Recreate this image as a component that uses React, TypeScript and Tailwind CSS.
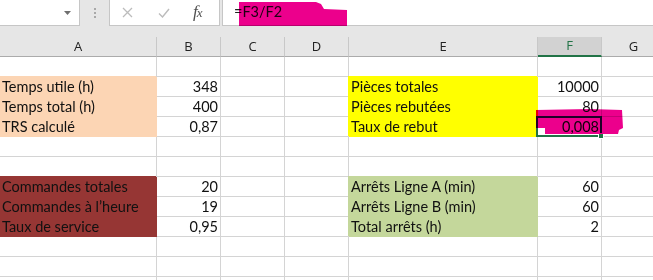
import React from 'react';
import clsx from 'clsx';

type Fill = 'peach' | 'yellow' | 'red' | 'green';

type CellData = {
    text?: string;
    right?: boolean;
    fill?: Fill;
};

const fillClasses: Record<Fill, string> = {
    peach: 'bg-[#fcd5b4] border-[#fcd5b4] shadow-[-1px_-1px_0_#fcd5b4]',
    yellow: 'bg-[#ffff00] border-[#ffff00] shadow-[-1px_-1px_0_#ffff00]',
    red: 'bg-[#963634] border-[#963634] shadow-[-1px_-1px_0_#963634]',
    green: 'bg-[#c4d79b] border-[#c4d79b] shadow-[-1px_-1px_0_#c4d79b]',
};

const columns = ['A', 'B', 'C', 'D', 'E', 'F', 'G'];

// 12 rows, 7 columns (A..G); empty object = empty cell
const row = (a?: CellData, b?: CellData, e?: CellData, f?: CellData): CellData[] => [
    a ?? {},
    b ?? {},
    {},
    {},
    e ?? {},
    f ?? {},
    {},
];

const rows: CellData[][] = [
    row(),
    row(
        { text: 'Temps utile (h)', fill: 'peach' },
        { text: '348', right: true },
        { text: 'Pièces totales', fill: 'yellow' },
        { text: '10000', right: true }
    ),
    row(
        { text: 'Temps total (h)', fill: 'peach' },
        { text: '400', right: true },
        { text: 'Pièces rebutées', fill: 'yellow' },
        { text: '80', right: true }
    ),
    row(
        { text: 'TRS calculé', fill: 'peach' },
        { text: '0,87', right: true },
        { text: 'Taux de rebut', fill: 'yellow' },
        { text: '0,008', right: true }
    ),
    row(),
    row(),
    row(
        { text: 'Commandes totales', fill: 'red' },
        { text: '20', right: true },
        { text: 'Arrêts Ligne A (min)', fill: 'green' },
        { text: '60', right: true }
    ),
    row(
        { text: 'Commandes à l’heure', fill: 'red' },
        { text: '19', right: true },
        { text: 'Arrêts Ligne B (min)', fill: 'green' },
        { text: '60', right: true }
    ),
    row(
        { text: 'Taux de service', fill: 'red' },
        { text: '0,95', right: true },
        { text: 'Total arrêts (h)', fill: 'green' },
        { text: '2', right: true }
    ),
    row(),
    row(),
    row(),
];

function Cell({ cell }: { cell: CellData }) {
    return (
        <div
            className={clsx(
                'h-[20px] border-r border-b flex items-end leading-[18px] whitespace-nowrap text-[14.5px] text-[#111]',
                cell.right ? 'justify-end pr-[2px]' : 'pl-[2px]',
                cell.fill ? fillClasses[cell.fill] : 'border-[#d4d4d4]'
            )}
        >
            {cell.text}
        </div>
    );
}

function FormulaBar() {
    return (
        <div className="h-[37px] bg-[#e6e6e6] flex items-start">
            <div className="w-[80px] h-[26px] bg-white border-b border-r border-[#c6c6c6] flex items-center justify-end pr-[8px]">
                <svg width="7" height="4" viewBox="0 0 7 4">
                    <polygon points="0,0 7,0 3.5,4" fill="#6f6f6f" />
                </svg>
            </div>
            <div className="w-[29px] h-[26px] flex flex-col items-center justify-center gap-[2px]">
                <span className="w-[2px] h-[2px] bg-[#a8a8a8]" />
                <span className="w-[2px] h-[2px] bg-[#a8a8a8]" />
                <span className="w-[2px] h-[2px] bg-[#a8a8a8]" />
            </div>
            <div className="w-[111px] h-[26px] bg-white border-b border-l border-r border-[#c6c6c6] flex items-center">
                <svg className="ml-[12px]" width="11" height="11" viewBox="0 0 11 11">
                    <path d="M1 1 L10 10 M10 1 L1 10" stroke="#bcbcbc" strokeWidth="1.3" fill="none" />
                </svg>
                <svg className="ml-[25px]" width="12" height="10" viewBox="0 0 12 10">
                    <path d="M1 5.5 L4.5 9 L11 1" stroke="#bcbcbc" strokeWidth="1.4" fill="none" />
                </svg>
                <span className="ml-[23px] font-['Liberation_Serif',serif] italic text-[17px] leading-none text-[#505050] -mt-[2px] tracking-[-1px]">
                    f<span className="text-[13px]">x</span>
                </span>
            </div>
            <div className="ml-[2px] flex-1 h-[26px] bg-white border-b border-l border-[#c6c6c6] flex items-center pl-[11px]">
                <span className="text-[14.5px] text-[#222] leading-none">=F3/F2</span>
            </div>
        </div>
    );
}

function HeaderRow() {
    return (
        <div className="grid grid-cols-[157px_64px_64px_64px_189px_64px_64px] bg-[#e6e6e6]">
            {columns.map((c) => (
                <div
                    key={c}
                    className={clsx(
                        "h-[20px] border-r border-[#c8c8c8] flex items-center justify-center font-['Open_Sans',sans-serif] text-[13px]",
                        c === 'F'
                            ? 'bg-[#d2d2d2] text-[#217346] border-b-2 border-b-[#217346]'
                            : 'text-[#222] border-b border-b-[#ababab]'
                    )}
                >
                    {c}
                </div>
            ))}
        </div>
    );
}

export default function App() {
    return (
        <div className="relative isolate w-[653px] h-[280px] overflow-hidden bg-white font-['Lato',sans-serif]">
            <FormulaBar />
            <HeaderRow />
            <div className="grid grid-cols-[157px_64px_64px_64px_189px_64px_64px] auto-rows-[20px]">
                {rows.map((r, i) => r.map((cell, j) => <Cell key={i + '-' + j} cell={cell} />))}
            </div>

            {/* active cell F4 */}
            <div className="absolute left-[536px] top-[116px] w-[66px] h-[21px] border-2 border-[#217346]" />
            <div className="absolute left-[598px] top-[133px] w-[6px] h-[6px] bg-[#217346] border border-white" />

            {/* highlighter scribbles */}
            <svg
                className="absolute inset-0 pointer-events-none mix-blend-multiply"
                width="653"
                height="280"
                viewBox="0 0 653 280"
            >
                <polygon points="239,2 316,2 321,4 324,9 347,10 347,26 239,26" fill="#ec008c" />
                <polygon
                    points="536,110 590,109 622,110 623,128 619,130 618,134 545,134 545,128 536,128"
                    fill="#ec008c"
                />
            </svg>
        </div>
    );
}
